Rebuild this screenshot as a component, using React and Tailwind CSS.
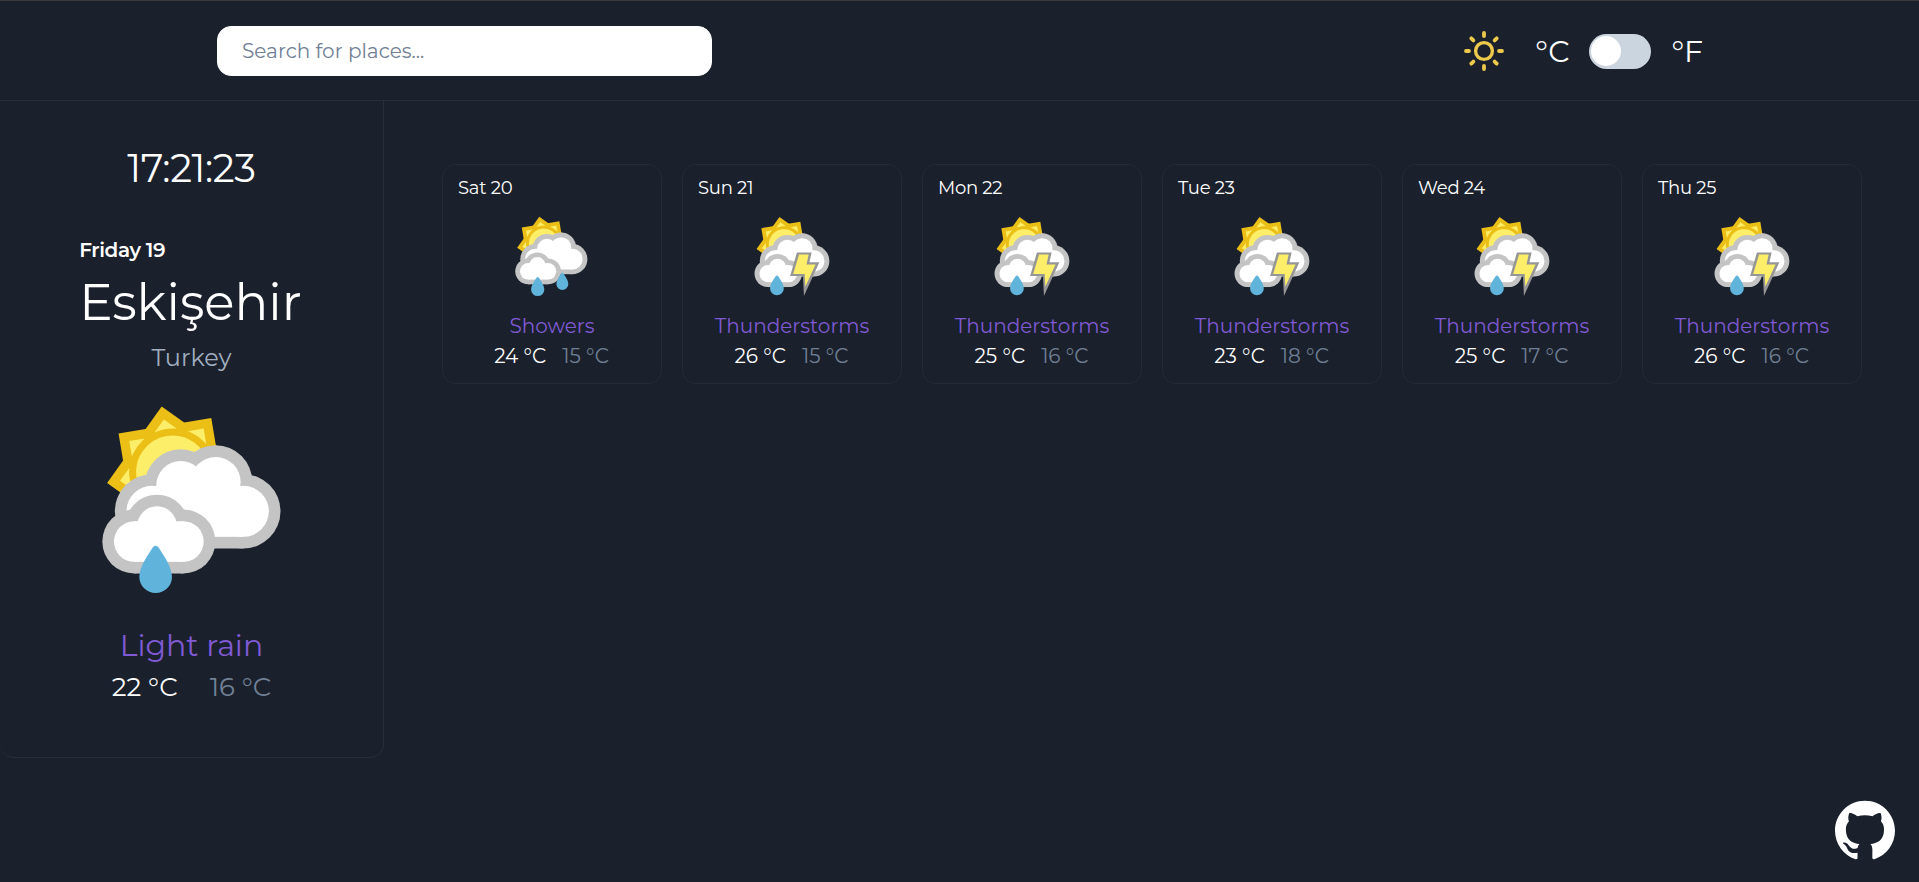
const forecast = [
  { day: "Sat 20", text: "Showers", icon: "showers", high: 24, low: 15 },
  { day: "Sun 21", text: "Thunderstorms", icon: "thunder", high: 26, low: 15 },
  { day: "Mon 22", text: "Thunderstorms", icon: "thunder", high: 25, low: 16 },
  { day: "Tue 23", text: "Thunderstorms", icon: "thunder", high: 23, low: 18 },
  { day: "Wed 24", text: "Thunderstorms", icon: "thunder", high: 25, low: 17 },
  { day: "Thu 25", text: "Thunderstorms", icon: "thunder", high: 26, low: 16 },
];

function Sun() {
  return (
    <g transform="translate(278 246) rotate(-9.5)">
      {[0, 45].map((a) => (
        <rect key={a} x="-141" y="-141" width="282" height="282" fill="#ecbf17" transform={`rotate(${a + 45})`} />
      ))}
      {[0, 45, 90, 135, 180, 225, 270, 315].map((a) => (
        <path key={a} d="M0-160L34-126H-34Z" fill="#fcee69" transform={`rotate(${a})`} />
      ))}
      <circle r="120" fill="#fcee69" stroke="#ecbf17" strokeWidth="21" />
    </g>
  );
}

function BigCloud({ grow, fill }) {
  return (
    <g fill={fill}>
      <circle cx="490" cy="364" r={76.5 + grow} />
      <circle cx="407" cy="276" r={75 + grow} />
      <circle cx="302" cy="286" r={73 + grow} />
      <circle cx="216" cy="364" r={76.5 + grow} />
      <rect x="216" y="288" width="274" height={152.5 + grow} />
    </g>
  );
}

function SmallCloud({ grow, fill }) {
  return (
    <g fill={fill}>
      <circle cx="163" cy="454.5" r={61 + grow} />
      <circle cx="310" cy="454.5" r={61 + grow} />
      <circle cx="231" cy="409" r={60 + grow} />
      <rect x="163" y="394" width="147" height={121.5 + grow} />
    </g>
  );
}

function Drop({ x, y, scale = 1 }) {
  return (
    <path
      transform={`translate(${x} ${y}) scale(${scale})`}
      fill="#60b3da"
      d="M-10-86Q0-99 10-86C22-66 49-30 49 0A49 49 0 0 1-49 0C-49-30-22-66-10-86Z"
    />
  );
}

function WeatherIcon({ kind, className }) {
  return (
    <svg viewBox="6 0 660 660" className={className} aria-hidden="true">
      <Sun />
      <BigCloud grow={35} fill="#c4c4c4" />
      <BigCloud grow={0} fill="#ffffff" />
      <SmallCloud grow={35} fill="#c4c4c4" />
      <SmallCloud grow={0} fill="#ffffff" />
      {kind === "showers" ? (
        <>
          <Drop x={233.5} y={589} />
          <Drop x={416} y={548} scale={0.9} />
        </>
      ) : (
        <Drop x={227} y={560} />
      )}
      {kind === "thunder" && (
        <>
          <path d="M370 303H475L459 374H530L420 614L413 472H321Z" fill="#969696" />
          <path d="M385 318H454L438 390H503L430 546L425 457H343Z" fill="#fcee69" />
        </>
      )}
    </svg>
  );
}

function Header() {
  return (
    <header className="flex h-[100px] items-center justify-between border-b border-[#2a2d39] pt-px pr-[216px] pl-[217px]">
      <input
        type="text"
        placeholder="Search for places..."
        className="h-[50px] w-[495px] rounded-[14px] border border-white bg-white px-6 text-xl text-gray-800 outline-none placeholder:text-[#718096] placeholder:opacity-100"
      />
      <div className="flex items-center text-[30px] leading-[37px]">
        <svg className="mr-[31px] size-10" viewBox="0 0 40 40" fill="none" stroke="#ecc94b" strokeLinecap="round">
          <circle cx="20" cy="20" r="8.4" strokeWidth="3.4" />
          <path
            strokeWidth="3.8"
            d="M20 2V5M20 35V38M2 20H5M35 20H38M7.3 7.3L9.4 9.4M30.6 30.6L32.7 32.7M7.3 32.7L9.4 30.6M30.6 9.4L32.7 7.3"
          />
        </svg>
        <span className="pt-px">°C</span>
        <button type="button" role="switch" aria-checked="false" className="mx-5 mt-px flex h-[35px] w-[62px] rounded-full bg-[#cbd5e0] p-[2px]">
          <span className="size-[30px] rounded-full bg-white" />
        </button>
        <span className="pt-px">°F</span>
      </div>
    </header>
  );
}

function Sidebar() {
  return (
    <aside className="flex h-[657px] w-[384px] shrink-0 flex-col items-center rounded-b-[14px] border-r border-b border-[#2a2d39]">
      <p className="mt-12 h-[39px] text-[38.5px] leading-[39px] tracking-[-0.4px]">17:21:23</p>
      <div className="mt-[50px] mr-0.5 flex flex-col">
        <p className="h-6 text-xl leading-6 font-semibold tracking-[-0.4px]">Friday 19</p>
        <h1 className="mt-3 h-[57px] text-[50px] leading-[57px]">Eskişehir</h1>
      </div>
      <p className="mt-3 h-[29px] text-2xl leading-[29px] text-[#a0aec0]">Turkey</p>
      <WeatherIcon kind="rain" className="mt-[18px] size-[220px] shrink-0" />
      <p className="mt-[17px] h-[37px] text-[30px] leading-[37px] text-[#805ad5]">Light rain</p>
      <div className="mt-2 flex h-[30px] gap-8 text-[26px] leading-[30px]">
        <span>22 °C</span>
        <span className="text-[#718096]">16 °C</span>
      </div>
    </aside>
  );
}

function DayCard({ day, text, icon, high, low }) {
  return (
    <article className="flex h-[220px] w-[220px] flex-col items-center rounded-[14px] border border-[#262a35]">
      <p className="mt-[11px] h-6 self-start pl-[15px] text-lg leading-6 tracking-[-0.25px]">{day}</p>
      <div className="mt-[9px] flex h-[105px] items-start pt-[0.7px]">
        <WeatherIcon kind={icon} className={icon === "showers" ? "size-[89.1px]" : "size-[92.4px]"} />
      </div>
      <p className="h-6 text-xl leading-6 text-[#805ad5]">{text}</p>
      <div className="mt-1.5 mr-px flex h-6 gap-4 text-xl leading-6">
        <span>{high} °C</span>
        <span className="text-[#718096]">{low} °C</span>
      </div>
    </article>
  );
}

export default function App() {
  return (
    <div className="min-h-[882px] border-t border-[#3a3a3c] bg-[#1a202c] font-[Montserrat,'Liberation_Sans',sans-serif] text-white">
      <Header />
      <div className="flex">
        <Sidebar />
        <main className="flex gap-5 pt-[63px] pl-[58px]">
          {forecast.map((d) => (
            <DayCard key={d.day} {...d} />
          ))}
        </main>
      </div>
      <a href="#github" aria-label="GitHub" className="fixed right-6 bottom-[22px]">
        <svg viewBox="0 0 24 24" className="size-[60px]" fill="#ffffff">
          <path d="M12 .297c-6.63 0-12 5.373-12 12 0 5.303 3.438 9.8 8.205 11.385.6.113.82-.258.82-.577 0-.285-.01-1.04-.015-2.04-3.338.724-4.042-1.61-4.042-1.61C4.422 18.07 3.633 17.7 3.633 17.7c-1.087-.744.084-.729.084-.729 1.205.084 1.838 1.236 1.838 1.236 1.07 1.835 2.809 1.305 3.495.998.108-.776.417-1.305.76-1.605-2.665-.3-5.466-1.332-5.466-5.93 0-1.31.465-2.38 1.235-3.22-.135-.303-.54-1.523.105-3.176 0 0 1.005-.322 3.3 1.23.96-.267 1.98-.399 3-.405 1.02.006 2.04.138 3 .405 2.28-1.552 3.285-1.23 3.285-1.23.645 1.653.24 2.873.12 3.176.765.84 1.23 1.91 1.23 3.22 0 4.61-2.805 5.625-5.475 5.92.42.36.81 1.096.81 2.22 0 1.606-.015 2.896-.015 3.286 0 .315.21.69.825.57C20.565 22.092 24 17.592 24 12.297c0-6.627-5.373-12-12-12" />
        </svg>
      </a>
    </div>
  );
}
